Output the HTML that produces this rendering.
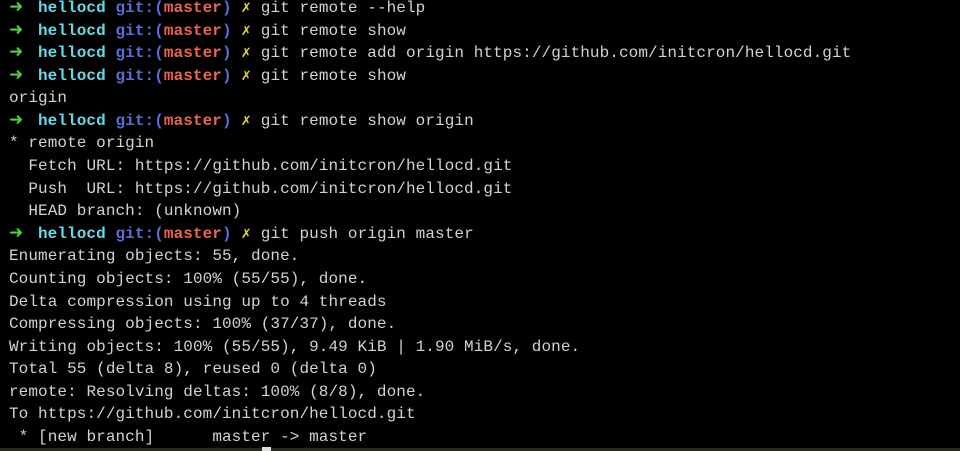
<!DOCTYPE html>
<html><head><meta charset="utf-8"><style>
html,body{margin:0;padding:0;background:#000;width:960px;height:451px;overflow:hidden}
pre{margin:0;position:absolute;left:9px;top:-3px;font-family:"Liberation Mono","DejaVu Sans Mono",monospace;font-size:16px;line-height:22.58px;letter-spacing:0.08px;color:#d2d2d2;white-space:pre}
.g{color:#4fd03c;font-weight:bold;display:inline-block;width:29px;line-height:0;font-size:17px;font-family:"DejaVu Sans",sans-serif}.c{color:#63dbe6;font-weight:bold}.b{color:#5b6bdc;font-weight:bold}.r{color:#ec6450;font-weight:bold}.y{color:#e6d33c;font-weight:bold}
.bar{position:absolute;left:0;top:448px;width:960px;height:3px;background:#2a2a1c}
.cur{position:absolute;left:262px;top:447px;width:9px;height:4px;background:#ddd}
</style></head><body>
<pre><span class="g">➜</span><span class="c">hellocd</span> <span class="b">git:(</span><span class="r">master</span><span class="b">)</span> <span class="y">✗</span> git remote --help
<span class="g">➜</span><span class="c">hellocd</span> <span class="b">git:(</span><span class="r">master</span><span class="b">)</span> <span class="y">✗</span> git remote show
<span class="g">➜</span><span class="c">hellocd</span> <span class="b">git:(</span><span class="r">master</span><span class="b">)</span> <span class="y">✗</span> git remote add origin https://github.com/initcron/hellocd.git
<span class="g">➜</span><span class="c">hellocd</span> <span class="b">git:(</span><span class="r">master</span><span class="b">)</span> <span class="y">✗</span> git remote show
origin
<span class="g">➜</span><span class="c">hellocd</span> <span class="b">git:(</span><span class="r">master</span><span class="b">)</span> <span class="y">✗</span> git remote show origin
* remote origin
  Fetch URL: https://github.com/initcron/hellocd.git
  Push  URL: https://github.com/initcron/hellocd.git
  HEAD branch: (unknown)
<span class="g">➜</span><span class="c">hellocd</span> <span class="b">git:(</span><span class="r">master</span><span class="b">)</span> <span class="y">✗</span> git push origin master
Enumerating objects: 55, done.
Counting objects: 100% (55/55), done.
Delta compression using up to 4 threads
Compressing objects: 100% (37/37), done.
Writing objects: 100% (55/55), 9.49 KiB | 1.90 MiB/s, done.
Total 55 (delta 8), reused 0 (delta 0)
remote: Resolving deltas: 100% (8/8), done.
To https://github.com/initcron/hellocd.git
 * [new branch]      master -&gt; master</pre>
<div class="bar"></div><div class="cur"></div>
</body></html>
